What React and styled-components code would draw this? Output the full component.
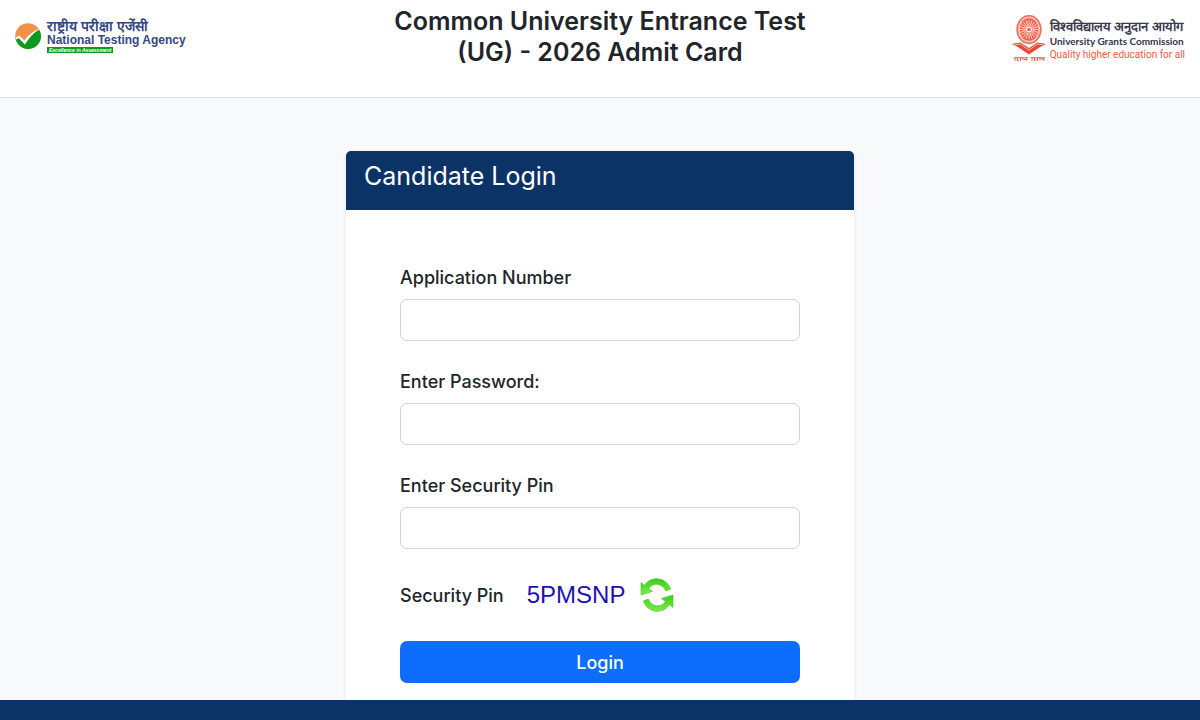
import { useState } from "react";
import styled, { ThemeProvider, createGlobalStyle } from "styled-components";

const theme = {
  navy: "#0b3366",
  blue: "#0d6efd",
  text: "#212529",
  border: "#ced4da",
  background: "#f8f9fb",
  orange: "#ee5b45",
};

const GlobalStyle = createGlobalStyle`
  * {
    box-sizing: border-box;
  }

  body {
    margin: 0;
    font-family: Inter, "Noto Sans", sans-serif;
    color: ${theme.text};
    background-color: ${theme.background};
  }
`;

const Page = styled.div`
  display: flex;
  flex-direction: column;
  min-height: 100vh;
`;

const Header = styled.header`
  display: grid;
  grid-template-columns: 1fr minmax(0, 440px) 1fr;
  align-items: start;
  padding: 6px 15px 29px;
  background-color: #fff;
  border-bottom: 1px solid #dee2e6;
`;

const Title = styled.h1`
  margin: 0;
  font-size: 25px;
  font-weight: 600;
  line-height: 31px;
  text-align: center;
`;

const Brand = styled.a`
  display: flex;
  align-items: ${({ $end }) => ($end ? "flex-end" : "center")};
  justify-self: ${({ $end }) => ($end ? "end" : "start")};
  gap: ${({ $end }) => ($end ? "4px" : "6px")};
  padding-top: ${({ $end }) => ($end ? "8px" : "13px")};
  text-decoration: none;
  white-space: nowrap;
`;

const BrandText = styled.span`
  display: flex;
  flex-direction: column;
  align-items: flex-start;
  font-family: "Liberation Sans", Arial, sans-serif;
`;

const BrandLine = styled.span`
  font-family: ${({ $font }) => $font || "inherit"};
  font-size: ${({ $size }) => $size}px;
  font-weight: ${({ $bold }) => ($bold ? 700 : 400)};
  line-height: 14px;
  color: ${({ $color }) => $color};
`;

const Tagline = styled.span`
  padding: 0 2px;
  background-color: #0b9a1e;
  color: #fff;
  font-size: 5px;
  font-style: italic;
  font-weight: 700;
  line-height: 6px;
`;

const Main = styled.main`
  flex: 1;
  display: flex;
  justify-content: center;
  padding: 53px 16px 0;
`;

const Card = styled.section`
  width: 100%;
  max-width: 508px;
  background-color: #fff;
  border-radius: 5px 5px 0 0;
  box-shadow: 0 2px 5px rgba(0, 0, 0, 0.08);
`;

const CardHeader = styled.div`
  padding: 10px 18px 18px;
  border-radius: 5px 5px 0 0;
  background-color: ${({ theme }) => theme.navy};
`;

const CardTitle = styled.h2`
  margin: 0;
  font-size: 25px;
  font-weight: 400;
  line-height: 31px;
  color: #fff;
`;

const Form = styled.form`
  display: flex;
  flex-direction: column;
  gap: 27px;
  padding: 54px 54px 17px;
`;

const Field = styled.div`
  display: flex;
  flex-direction: column;
  gap: 8px;
`;

const Label = styled.label`
  font-size: 18px;
  font-weight: 500;
  line-height: 27px;
`;

const Input = styled.input`
  width: 100%;
  height: 42px;
  padding: 6px 12px;
  border: 1px solid ${({ theme }) => theme.border};
  border-radius: 7px;
  background-color: #fff;
  font: inherit;
  font-size: 18px;
  color: inherit;
`;

const PinRow = styled.div`
  display: flex;
  align-items: center;
  height: 38px;
  font-size: 18px;
  font-weight: 500;
`;

const Captcha = styled.output`
  margin-left: 23px;
  font-family: "Liberation Sans", Arial, sans-serif;
  font-size: 24px;
  font-weight: 400;
  line-height: 34px;
  color: #1e10b4;
`;

const IconButton = styled.button`
  display: flex;
  margin-left: 15px;
  padding: 0;
  border: 0;
  background: none;
  cursor: pointer;
`;

const LoginButton = styled.button`
  height: 42px;
  border: 0;
  border-radius: 7px;
  background-color: ${({ theme }) => theme.blue};
  font: inherit;
  font-size: 18px;
  font-weight: 500;
  color: #fff;
  cursor: pointer;
`;

const Footer = styled.footer`
  padding: 10px;
  background-color: ${({ theme }) => theme.navy};
`;

const NtaMark = () => (
  <svg width="26" height="26" viewBox="0 0 26 26" aria-hidden="true">
    <circle cx="13" cy="13" r="12.8" fill="#f39148" />
    <path
      d="M.6 15.5 4 14.2 9.6 19.6C14 13.5 18.5 9 24.5 7.2A12.8 12.8 0 1 1 .6 15.5Z"
      fill="#0b9a1e"
    />
    <path
      d="M.8 14.6 4.4 12.6 9.4 17.6C13.5 11.8 18.5 7.6 25 5.2 18.8 9.6 14 14.6 10 21.4L3.8 15.2 1.2 16.6Z"
      fill="#fff"
    />
  </svg>
);

const petals = Array.from({ length: 20 }, (_, i) => i * 18);

const UgcMark = () => (
  <svg width="34" height="48" viewBox="0 0 34 48" fill="none" aria-hidden="true">
    <ellipse cx="17" cy="15.5" rx="12.6" ry="14.6" fill="#f9c3b8" />
    <ellipse cx="17" cy="15.5" rx="11.8" ry="13.8" stroke="#f0705c" strokeWidth="1.6" />
    <ellipse cx="17" cy="15.5" rx="9.4" ry="11.2" fill="#f0624c" />
    {petals.map((angle) => (
      <path
        key={angle}
        d="M17 12V6"
        stroke="#fde5df"
        strokeWidth="0.8"
        transform={`rotate(${angle} 17 15.5)`}
      />
    ))}
    <circle cx="17" cy="15.5" r="3" fill="#fff" />
    <circle cx="17" cy="15.5" r="1.8" fill="#ee5b45" />
    <path
      d="M0 30 8.5 28.4 17 34 25.5 28.4 34 30 29 32.4 17 40.5 5 32.4Z"
      fill="#ea4a35"
    />
    <path
      d="M3 30.6 8.6 30.2 17 36 25.4 30.2 31 30.6"
      stroke="#fff"
      strokeWidth="0.6"
    />
    <path
      d="M2 43.8H16M18.5 43.8H33M3 43.8v3M5.5 43.8v2M5 46.4h2M8.5 43.8v3M11 43.8v2.4M12 45.4h2M14.8 43.8v3M20 43.8v3M22.5 43.8v2M22 46.4h2M25.5 43.8v3M28 43.8v2.6M29 45.2h2M31.8 43.8v3"
      stroke="#ee5b45"
      strokeWidth="1"
    />
  </svg>
);

const RefreshIcon = () => (
  <svg width="34" height="34" viewBox="0 0 34 34" aria-hidden="true">
    <defs>
      <linearGradient id="leaf" x1="0" y1="0" x2="0" y2="1">
        <stop offset="0" stopColor="#36cf12" />
        <stop offset="1" stopColor="#7ded4a" />
      </linearGradient>
    </defs>
    <g fill="url(#leaf)" stroke="#4cc22c" strokeWidth="0.6" strokeLinejoin="round">
      <path d="M1 4.5 4.6 7.4C9.5-1.6 25.5-2.6 30.6 11L25.8 13C22 4.4 12.6 4.2 8.6 10.6L12.6 13.4 1 17Z" />
      <path d="M33 29.5 29.4 26.6C24.5 35.6 8.5 36.6 3.4 23L8.2 21C12 29.6 21.4 29.8 25.4 23.4L21.4 20.6 33 17Z" />
    </g>
  </svg>
);

const FormField = ({ id, label, type = "text" }) => {
  const [value, setValue] = useState("");

  return (
    <Field>
      <Label htmlFor={id}>{label}</Label>
      <Input
        id={id}
        type={type}
        value={value}
        autoComplete="off"
        onChange={(e) => setValue(e.currentTarget.value)}
      />
    </Field>
  );
};

const App = () => {
  return (
    <ThemeProvider theme={theme}>
      <GlobalStyle />
      <Page>
        <Header>
          <Brand href="#nta">
            <NtaMark />
            <BrandText>
              <BrandLine $size={14} $bold $color="#35487f">
                राष्ट्रीय परीक्षा एजेंसी
              </BrandLine>
              <BrandLine $size={12} $bold $color="#35487f">
                National Testing Agency
              </BrandLine>
              <Tagline>Excellence in Assessment</Tagline>
            </BrandText>
          </Brand>
          <Title>Common University Entrance Test (UG) - 2026 Admit Card</Title>
          <Brand href="#ugc" $end>
            <UgcMark />
            <BrandText>
              <BrandLine $size={13} $bold $color="#3c3a4c">
                विश्वविद्यालय अनुदान आयोग
              </BrandLine>
              <BrandLine $size={10} $bold $font="Lato, sans-serif" $color="#33344a">
                University Grants Commission
              </BrandLine>
              <BrandLine $size={10} $font="Roboto, sans-serif" $color={theme.orange}>
                Quality higher education for all
              </BrandLine>
            </BrandText>
          </Brand>
        </Header>
        <Main>
          <Card>
            <CardHeader>
              <CardTitle>Candidate Login</CardTitle>
            </CardHeader>
            <Form onSubmit={(e) => e.preventDefault()}>
              <FormField id="application" label="Application Number" />
              <FormField id="password" label="Enter Password:" type="password" />
              <FormField id="pin" label="Enter Security Pin" />
              <PinRow>
                <span>Security Pin</span>
                <Captcha>5PMSNP</Captcha>
                <IconButton type="button" aria-label="Refresh security pin">
                  <RefreshIcon />
                </IconButton>
              </PinRow>
              <LoginButton type="submit">Login</LoginButton>
            </Form>
          </Card>
        </Main>
        <Footer />
      </Page>
    </ThemeProvider>
  );
};

export default App;
